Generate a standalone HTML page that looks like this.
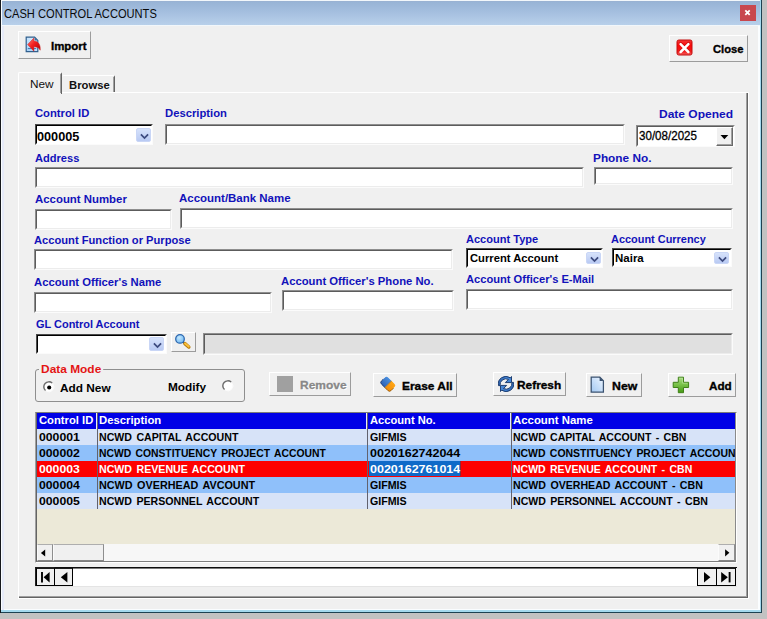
<!DOCTYPE html><html><head><meta charset="utf-8"><title>Cash Control Accounts</title><style>
html,body{margin:0;padding:0;}body{width:767px;height:619px;overflow:hidden;background:#c2c2c2;position:relative;font-family:"Liberation Sans",sans-serif;}
div{position:absolute;}.t{position:absolute;white-space:nowrap;line-height:1;transform-origin:0 0;}svg{display:block;}
</style></head><body>
<div style="left:0px;top:0px;width:762px;height:613px;background:#1e4252;"></div>
<div style="left:1px;top:0px;width:760px;height:612px;background:#a4d9ee;"></div>
<div style="left:1px;top:0px;width:759px;height:610px;background:#fafdff;"></div>
<div style="left:0px;top:0px;width:1px;height:613px;background:#16181c;"></div>
<div style="left:3px;top:1px;width:755px;height:608px;background:#f0f0f0;"></div>
<div style="left:2px;top:26px;width:2px;height:584px;background:#e6eaf8;"></div>
<div style="left:2px;top:0px;width:758px;height:26px;background:#f2f7fb;"></div>
<div style="left:2px;top:1px;width:758px;height:23.5px;background:linear-gradient(#9ab0d0 0,#98b4d6 5%,#a6c0e0 50%,#b8d0ea 100%);"></div>
<div style="left:740px;top:5px;width:16px;height:16px;background:#c8474e;"><svg width="16" height="16" viewBox="0 0 16 16"><path d="M5.3 5.4 L9.7 9.8 M9.7 5.4 L5.3 9.8" stroke="#fff" stroke-width="1.8"/></svg></div>
<div style="left:18px;top:31px;width:73px;height:28px;background:#f0f0f0;box-sizing:border-box;border-top:1px solid #fff;border-left:1px solid #fff;border-right:1px solid #9c9c9c;border-bottom:1px solid #9c9c9c;"><svg width="17" height="17" viewBox="0 0 17 17" style="position:absolute;left:6.1px;top:4.4px"><defs><linearGradient id="gp" x1="0" y1="1" x2="1" y2="0"><stop offset="0" stop-color="#a4d0f8"/><stop offset="1" stop-color="#e6f3ff"/></linearGradient><linearGradient id="gr" x1="0" y1="0" x2="1" y2="1"><stop offset="0" stop-color="#ff8a7a"/><stop offset="0.45" stop-color="#f42020"/><stop offset="1" stop-color="#b00000"/></linearGradient></defs><path d="M1.2 1.2 H9.6 L12.8 4.4 V15.6 H1.2 Z" fill="url(#gp)" stroke="#30608e" stroke-width="1.2"/><path d="M9.6 1.2 V4.4 H12.8 Z" fill="#3f6f9a"/><path d="M2.8 12.6 H11.2" stroke="#3a78b0" stroke-width="1"/><path d="M2.6 8.6 L8.9 2.0 V5.1 C12.6 5.2 15.8 8 15.2 14.2 C14 11.8 12.0 10.8 8.9 10.8 V15.2 Z" fill="url(#gr)" stroke="#d02020" stroke-width="0.5"/></svg></div>
<div style="left:669px;top:35px;width:79px;height:27px;background:#f0f0f0;box-sizing:border-box;border-top:1px solid #fff;border-left:1px solid #fff;border-right:1px solid #9c9c9c;border-bottom:1px solid #9c9c9c;"><svg width="17" height="17" viewBox="0 0 17 17" style="position:absolute;left:5.5px;top:3.4px"><defs><linearGradient id="gc" x1="0" y1="0" x2="0" y2="1"><stop offset="0" stop-color="#f23a3a"/><stop offset="0.35" stop-color="#fa0808"/><stop offset="0.75" stop-color="#f01818"/><stop offset="1" stop-color="#f46060"/></linearGradient></defs><rect x="1" y="1" width="15" height="15" rx="1.8" fill="url(#gc)" stroke="#c40c0c" stroke-width="1"/><path d="M4.6 4.2 L12.6 12.2 M12.6 4.2 L4.6 12.2" stroke="#b80000" stroke-opacity="0.7" stroke-width="2.6" stroke-linecap="round"/><path d="M4.6 5.2 L12.4 13 M12.4 5.2 L4.6 13" stroke="#fff" stroke-width="2.5" stroke-linecap="round"/></svg></div>
<div style="left:18px;top:92px;width:731px;height:507px;box-sizing:border-box;background:#f0f0f0;border-top:1px solid #fff;border-left:1px solid #fff;border-right:1px solid #fff;border-bottom:1px solid #fff;"></div>
<div style="left:19px;top:93px;width:729px;height:505px;box-sizing:border-box;border-right:1px solid #646464;border-bottom:1px solid #646464;"></div>
<div style="left:19px;top:93px;width:728px;height:504px;box-sizing:border-box;border-right:1px solid #a0a0a0;border-bottom:1px solid #a0a0a0;"></div>
<div style="left:62px;top:75px;width:53px;height:17px;box-sizing:border-box;background:#f0f0f0;border-top:1px solid #fff;border-right:1px solid #646464;border-radius:2px 2px 0 0;"></div>
<div style="left:113px;top:77px;width:1px;height:15px;background:#a0a0a0;"></div>
<div style="left:18px;top:72px;width:44px;height:22px;box-sizing:border-box;background:#f0f0f0;border-top:1px solid #fff;border-left:1px solid #fff;border-right:1px solid #646464;border-radius:2px 2px 0 0;"></div>
<div style="left:60px;top:74px;width:1px;height:19px;background:#a0a0a0;"></div>
<div style="left:19px;top:91px;width:41px;height:3px;background:#f0f0f0;"></div>
<div style="left:35px;top:124px;width:118px;height:21px;background:#fff;box-sizing:border-box;border-top:1px solid #4a4a4a;border-left:1px solid #4a4a4a;border-right:1px solid #fbfbfb;border-bottom:1px solid #fbfbfb;"><div style="left:0;top:0;right:0;bottom:0;box-sizing:border-box;border-top:1px solid #000;border-left:1px solid #000;border-right:1px solid #fff;border-bottom:1px solid #fff;"></div></div>
<div style="left:136px;top:128px;width:15px;height:14px;background:linear-gradient(#d6e2fb,#b9caf3);box-sizing:border-box;border:1px solid #c9d6f6;border-radius:2px;"><svg width="15" height="14" viewBox="0 0 15 14" style="position:absolute;left:0;top:0"><path d="M3.9 5.4 L7.5 9 L11.1 5.4" fill="none" stroke="#3c4a7e" stroke-width="1.75" stroke-linecap="butt" stroke-linejoin="miter"/></svg></div>
<div style="left:165px;top:124px;width:460px;height:21px;background:#fff;box-sizing:border-box;border-top:1px solid #8e8e8e;border-left:1px solid #8e8e8e;border-right:1px solid #fbfbfb;border-bottom:1px solid #fbfbfb;"><div style="left:0;top:0;right:0;bottom:0;box-sizing:border-box;border-top:1px solid #5c5c5c;border-left:1px solid #5c5c5c;border-right:1px solid #ececec;border-bottom:1px solid #ececec;"></div></div>
<div style="left:636px;top:125px;width:99px;height:22px;background:#fff;box-sizing:border-box;border-top:1px solid #8e8e8e;border-left:1px solid #8e8e8e;border-right:1px solid #fbfbfb;border-bottom:1px solid #fbfbfb;"><div style="left:0;top:0;right:0;bottom:0;box-sizing:border-box;border-top:1px solid #5c5c5c;border-left:1px solid #5c5c5c;border-right:1px solid #fff;border-bottom:1px solid #fff;"></div></div>
<div style="left:716px;top:127px;width:17px;height:19px;background:#f0f0f0;box-sizing:border-box;border-top:1px solid #fff;border-left:1px solid #fff;border-right:1px solid #6a6a6a;border-bottom:1px solid #6a6a6a;"><div style="left:0;top:0;right:0;bottom:0;box-sizing:border-box;border-right:1px solid #a0a0a0;border-bottom:1px solid #a0a0a0;"></div><svg width="15" height="17" viewBox="0 0 15 17" style="position:absolute;left:0;top:0"><path d="M3.5 7.0 H11.3 L7.4 11.2 Z" fill="#000"/></svg></div>
<div style="left:35px;top:167px;width:549px;height:21px;background:#fff;box-sizing:border-box;border-top:1px solid #8e8e8e;border-left:1px solid #8e8e8e;border-right:1px solid #fbfbfb;border-bottom:1px solid #fbfbfb;"><div style="left:0;top:0;right:0;bottom:0;box-sizing:border-box;border-top:1px solid #5c5c5c;border-left:1px solid #5c5c5c;border-right:1px solid #ececec;border-bottom:1px solid #ececec;"></div></div>
<div style="left:594px;top:167px;width:139px;height:18px;background:#fff;box-sizing:border-box;border-top:1px solid #8e8e8e;border-left:1px solid #8e8e8e;border-right:1px solid #fbfbfb;border-bottom:1px solid #fbfbfb;"><div style="left:0;top:0;right:0;bottom:0;box-sizing:border-box;border-top:1px solid #5c5c5c;border-left:1px solid #5c5c5c;border-right:1px solid #ececec;border-bottom:1px solid #ececec;"></div></div>
<div style="left:35px;top:209px;width:137px;height:21px;background:#fff;box-sizing:border-box;border-top:1px solid #8e8e8e;border-left:1px solid #8e8e8e;border-right:1px solid #fbfbfb;border-bottom:1px solid #fbfbfb;"><div style="left:0;top:0;right:0;bottom:0;box-sizing:border-box;border-top:1px solid #5c5c5c;border-left:1px solid #5c5c5c;border-right:1px solid #ececec;border-bottom:1px solid #ececec;"></div></div>
<div style="left:180px;top:208px;width:553px;height:21px;background:#fff;box-sizing:border-box;border-top:1px solid #8e8e8e;border-left:1px solid #8e8e8e;border-right:1px solid #fbfbfb;border-bottom:1px solid #fbfbfb;"><div style="left:0;top:0;right:0;bottom:0;box-sizing:border-box;border-top:1px solid #5c5c5c;border-left:1px solid #5c5c5c;border-right:1px solid #ececec;border-bottom:1px solid #ececec;"></div></div>
<div style="left:34px;top:249px;width:419px;height:21px;background:#fff;box-sizing:border-box;border-top:1px solid #8e8e8e;border-left:1px solid #8e8e8e;border-right:1px solid #fbfbfb;border-bottom:1px solid #fbfbfb;"><div style="left:0;top:0;right:0;bottom:0;box-sizing:border-box;border-top:1px solid #5c5c5c;border-left:1px solid #5c5c5c;border-right:1px solid #ececec;border-bottom:1px solid #ececec;"></div></div>
<div style="left:466px;top:248px;width:137px;height:20px;background:#fff;box-sizing:border-box;border-top:1px solid #4a4a4a;border-left:1px solid #4a4a4a;border-right:1px solid #fbfbfb;border-bottom:1px solid #fbfbfb;"><div style="left:0;top:0;right:0;bottom:0;box-sizing:border-box;border-top:1px solid #000;border-left:1px solid #000;border-right:1px solid #fff;border-bottom:1px solid #fff;"></div></div>
<div style="left:586px;top:252px;width:15px;height:12px;background:linear-gradient(#d6e2fb,#b9caf3);box-sizing:border-box;border:1px solid #c9d6f6;border-radius:2px;"><svg width="15" height="12" viewBox="0 0 15 12" style="position:absolute;left:0;top:0"><path d="M3.9 4.4 L7.5 8 L11.1 4.4" fill="none" stroke="#3c4a7e" stroke-width="1.75" stroke-linecap="butt" stroke-linejoin="miter"/></svg></div>
<div style="left:612px;top:248px;width:120px;height:19px;background:#fff;box-sizing:border-box;border-top:1px solid #4a4a4a;border-left:1px solid #4a4a4a;border-right:1px solid #fbfbfb;border-bottom:1px solid #fbfbfb;"><div style="left:0;top:0;right:0;bottom:0;box-sizing:border-box;border-top:1px solid #000;border-left:1px solid #000;border-right:1px solid #fff;border-bottom:1px solid #fff;"></div></div>
<div style="left:714px;top:252px;width:15px;height:12px;background:linear-gradient(#d6e2fb,#b9caf3);box-sizing:border-box;border:1px solid #c9d6f6;border-radius:2px;"><svg width="15" height="12" viewBox="0 0 15 12" style="position:absolute;left:0;top:0"><path d="M3.9 4.4 L7.5 8 L11.1 4.4" fill="none" stroke="#3c4a7e" stroke-width="1.75" stroke-linecap="butt" stroke-linejoin="miter"/></svg></div>
<div style="left:34px;top:292px;width:238px;height:21px;background:#fff;box-sizing:border-box;border-top:1px solid #8e8e8e;border-left:1px solid #8e8e8e;border-right:1px solid #fbfbfb;border-bottom:1px solid #fbfbfb;"><div style="left:0;top:0;right:0;bottom:0;box-sizing:border-box;border-top:1px solid #5c5c5c;border-left:1px solid #5c5c5c;border-right:1px solid #ececec;border-bottom:1px solid #ececec;"></div></div>
<div style="left:282px;top:290px;width:172px;height:21px;background:#fff;box-sizing:border-box;border-top:1px solid #8e8e8e;border-left:1px solid #8e8e8e;border-right:1px solid #fbfbfb;border-bottom:1px solid #fbfbfb;"><div style="left:0;top:0;right:0;bottom:0;box-sizing:border-box;border-top:1px solid #5c5c5c;border-left:1px solid #5c5c5c;border-right:1px solid #ececec;border-bottom:1px solid #ececec;"></div></div>
<div style="left:466px;top:289px;width:267px;height:21px;background:#fff;box-sizing:border-box;border-top:1px solid #8e8e8e;border-left:1px solid #8e8e8e;border-right:1px solid #fbfbfb;border-bottom:1px solid #fbfbfb;"><div style="left:0;top:0;right:0;bottom:0;box-sizing:border-box;border-top:1px solid #5c5c5c;border-left:1px solid #5c5c5c;border-right:1px solid #ececec;border-bottom:1px solid #ececec;"></div></div>
<div style="left:36px;top:334px;width:131px;height:20px;background:#fff;box-sizing:border-box;border-top:1px solid #4a4a4a;border-left:1px solid #4a4a4a;border-right:1px solid #fbfbfb;border-bottom:1px solid #fbfbfb;"><div style="left:0;top:0;right:0;bottom:0;box-sizing:border-box;border-top:1px solid #000;border-left:1px solid #000;border-right:1px solid #fff;border-bottom:1px solid #fff;"></div></div>
<div style="left:149px;top:337px;width:15px;height:14px;background:linear-gradient(#d6e2fb,#b9caf3);box-sizing:border-box;border:1px solid #c9d6f6;border-radius:2px;"><svg width="15" height="14" viewBox="0 0 15 14" style="position:absolute;left:0;top:0"><path d="M3.9 5.4 L7.5 9 L11.1 5.4" fill="none" stroke="#3c4a7e" stroke-width="1.75" stroke-linecap="butt" stroke-linejoin="miter"/></svg></div>
<div style="left:171px;top:332px;width:25px;height:20px;background:#f0f0f0;box-sizing:border-box;border-top:1px solid #fff;border-left:1px solid #fff;border-right:1px solid #9c9c9c;border-bottom:1px solid #9c9c9c;"><svg width="22" height="18" viewBox="0 0 22 18" style="position:absolute;left:0;top:0"><defs><radialGradient id="gm" cx="0.4" cy="0.35" r="0.75"><stop offset="0" stop-color="#c4e8fe"/><stop offset="1" stop-color="#68b4f2"/></radialGradient></defs><path d="M10.6 8.6 L12.6 10.4" stroke="#2c4e7c" stroke-width="1.8"/><path d="M12.9 10.6 L16.8 14" stroke="#b87c0c" stroke-width="3.5" stroke-linecap="round"/><path d="M13.1 10.5 L16.7 13.6" stroke="#fac03a" stroke-width="2" stroke-linecap="round"/><circle cx="8" cy="5.9" r="4.3" fill="url(#gm)" stroke="#2f69b0" stroke-width="1.3"/></svg></div>
<div style="left:203px;top:333px;width:530px;height:22px;background:#e0e0e0;box-sizing:border-box;border-top:1px solid #8e8e8e;border-left:1px solid #8e8e8e;border-right:1px solid #fbfbfb;border-bottom:1px solid #fbfbfb;"><div style="left:0;top:0;right:0;bottom:0;box-sizing:border-box;border-top:1px solid #5c5c5c;border-left:1px solid #5c5c5c;border-right:1px solid #ececec;border-bottom:1px solid #ececec;"></div></div>
<div style="left:35px;top:369px;width:210px;height:33px;box-sizing:border-box;border:1px solid #8e8e8e;border-radius:3px;"></div>
<div style="left:43px;top:381px;width:12px;height:12px;"><svg width="12" height="12" viewBox="0 0 12 12"><circle cx="6" cy="6" r="4.7" fill="#fff"/><path d="M2.5 9.6 A5 5 0 0 1 9.2 2.1" fill="none" stroke="#6c6c6c" stroke-width="1.4"/><path d="M9.9 2.9 A5 5 0 0 1 3.2 10.1" fill="none" stroke="#fbfbfb" stroke-width="1"/><circle cx="6.2" cy="6.5" r="2.05" fill="#000"/></svg></div>
<div style="left:221.5px;top:380.2px;width:12px;height:12px;"><svg width="12" height="12" viewBox="0 0 12 12"><circle cx="6" cy="6" r="4.7" fill="#fff"/><path d="M2.5 9.6 A5 5 0 0 1 9.2 2.1" fill="none" stroke="#6c6c6c" stroke-width="1.4"/><path d="M9.9 2.9 A5 5 0 0 1 3.2 10.1" fill="none" stroke="#fbfbfb" stroke-width="1"/></svg></div>
<div style="left:269px;top:372px;width:82px;height:24px;background:#f0f0f0;box-sizing:border-box;border-top:1px solid #fff;border-left:1px solid #fff;border-right:1px solid #9c9c9c;border-bottom:1px solid #9c9c9c;"><div style="left:7px;top:3px;width:16px;height:16px;background:#a0a0a0;"></div></div>
<div style="left:373px;top:373px;width:84px;height:24px;background:#f0f0f0;box-sizing:border-box;border-top:1px solid #fff;border-left:1px solid #fff;border-right:1px solid #9c9c9c;border-bottom:1px solid #9c9c9c;"><svg width="18" height="18" viewBox="0 0 18 18" style="position:absolute;left:5px;top:1.4px"><defs><clipPath id="ce"><rect x="2.2" y="4.3" width="13.6" height="9.4" rx="2.3"/></clipPath><linearGradient id="eb" x1="0" y1="0" x2="0" y2="1"><stop offset="0" stop-color="#4c92e2"/><stop offset="1" stop-color="#2f62b4"/></linearGradient><linearGradient id="eo" x1="0" y1="0" x2="0" y2="1"><stop offset="0" stop-color="#ffa818"/><stop offset="1" stop-color="#f48c08"/></linearGradient></defs><g transform="rotate(45 9 9)"><g clip-path="url(#ce)"><rect x="2" y="4" width="7.2" height="10" fill="url(#eb)"/><rect x="9.2" y="4" width="7" height="10" fill="url(#eo)"/><rect x="8.8" y="4" width="0.8" height="10" fill="#7a6a50" opacity="0.7"/></g><path d="M2.2 9 V11.4 A2.3 2.3 0 0 0 4.5 13.7 H9.2" fill="none" stroke="#1c3c78" stroke-width="0.9"/><path d="M9.2 13.7 H13.5 A2.3 2.3 0 0 0 15.8 11.4 V8" fill="none" stroke="#9c5c08" stroke-width="0.9"/></g></svg></div>
<div style="left:493px;top:372px;width:73px;height:24px;background:#f0f0f0;box-sizing:border-box;border-top:1px solid #fff;border-left:1px solid #fff;border-right:1px solid #9c9c9c;border-bottom:1px solid #9c9c9c;"><svg width="16" height="16" viewBox="0 0 15.3 15.3" style="position:absolute;left:3.9px;top:2.7px"><defs><linearGradient id="gf" x1="0" y1="0" x2="1" y2="0"><stop offset="0" stop-color="#2f66b4"/><stop offset="1" stop-color="#4a8cdc"/></linearGradient></defs><path id="ra" d="M0.5 9.2 A7.2 7.2 0 0 1 11.7 1.7 L12.9 0.5 V6.3 H7.0 L10 3.3 A5.6 5.6 0 0 0 2.0 9.2 Z" fill="url(#gf)" stroke="#16366a" stroke-width="0.9" stroke-linejoin="round"/><use href="#ra" transform="rotate(180 7.65 7.65)"/></svg></div>
<div style="left:586px;top:373px;width:56px;height:24px;background:#f0f0f0;box-sizing:border-box;border-top:1px solid #fff;border-left:1px solid #fff;border-right:1px solid #9c9c9c;border-bottom:1px solid #9c9c9c;"><svg width="15" height="18" viewBox="0 0 15 18" style="position:absolute;left:3.4px;top:2.3px"><defs><linearGradient id="gn" x1="0" y1="1" x2="1" y2="0"><stop offset="0" stop-color="#a2c8f2"/><stop offset="0.6" stop-color="#cfe3fa"/><stop offset="1" stop-color="#f2f8ff"/></linearGradient></defs><path d="M1.2 1.2 H9.8 L13.4 4.8 V16.0 H1.2 Z" fill="url(#gn)" stroke="#3a5270" stroke-width="1.25"/><path d="M9.6 1.2 V5 H13.4 Z" fill="#3a5270"/></svg></div>
<div style="left:668px;top:373px;width:68px;height:24px;background:#f0f0f0;box-sizing:border-box;border-top:1px solid #fff;border-left:1px solid #fff;border-right:1px solid #9c9c9c;border-bottom:1px solid #9c9c9c;"><svg width="18" height="18" viewBox="0 0 18 18" style="position:absolute;left:3.2px;top:2.3px"><defs><linearGradient id="ga" x1="0" y1="0" x2="0" y2="1"><stop offset="0" stop-color="#a8dc84"/><stop offset="0.45" stop-color="#7cc44c"/><stop offset="1" stop-color="#469a14"/></linearGradient></defs><path d="M6.3 1.2 H11.5 V6.3 H16.6 V11.5 H11.5 V16.7 H6.3 V11.5 H1.2 V6.3 H6.3 Z" fill="url(#ga)" stroke="#3f8018" stroke-width="1" stroke-linejoin="round"/><path d="M7.2 2.2 H10.6 V7.2 H15.6" fill="none" stroke="#d4f0b8" stroke-opacity="0.55" stroke-width="0.8"/></svg></div>
<div style="left:35px;top:412px;width:702px;height:151px;box-sizing:border-box;background:#ece9d8;border-top:1px solid #7a7a7a;border-left:1px solid #a0a0a0;border-right:1px solid #fff;border-bottom:1px solid #fff;"></div>
<div style="left:36px;top:413px;width:700px;height:149px;box-sizing:border-box;border-left:1px solid #646464;border-right:1px solid #8a8a8a;border-bottom:1px solid #7e7e7e;"></div>
<div style="left:37px;top:413px;width:698px;height:16px;background:#0000e6;"></div>
<div style="left:37px;top:429px;width:698px;height:16px;background:#d7e3f8;"></div>
<div style="left:37px;top:445px;width:698px;height:16px;background:#8fc0fa;"></div>
<div style="left:37px;top:461px;width:698px;height:16px;background:#fe0000;"></div>
<div style="left:37px;top:477px;width:698px;height:16px;background:#8fc0fa;"></div>
<div style="left:37px;top:493px;width:698px;height:16px;background:#d7e3f8;"></div>
<div style="left:369px;top:461px;width:91px;height:15px;background:#0f6ac8;"></div>
<div style="left:460px;top:461px;width:1px;height:15px;background:#8a2a3a;"></div>
<div style="left:96px;top:413px;width:1px;height:16px;background:#e8e8ff;"></div>
<div style="left:97px;top:413px;width:1px;height:96px;background:#62626e;"></div>
<div style="left:366px;top:413px;width:1px;height:16px;background:#e8e8ff;"></div>
<div style="left:367px;top:413px;width:1px;height:96px;background:#62626e;"></div>
<div style="left:510px;top:413px;width:1px;height:16px;background:#e8e8ff;"></div>
<div style="left:511px;top:413px;width:1px;height:96px;background:#62626e;"></div>
<div style="left:37px;top:544px;width:698px;height:17px;background:#f7f7f7;"></div>
<div style="left:37px;top:544px;width:16px;height:17px;background:#f0f0f0;box-sizing:border-box;border-top:1px solid #aeaeae;border-left:1px solid #fbfbfb;border-right:1px solid #8e8e8e;border-bottom:1px solid #868686;"><svg width="14" height="15" viewBox="0 0 14 15"><path d="M7.2 4.4 V11.4 L2.9 7.9 Z" fill="#000"/></svg></div>
<div style="left:53px;top:544px;width:51px;height:17px;background:#f0f0f0;box-sizing:border-box;border-top:1px solid #aeaeae;border-left:1px solid #fbfbfb;border-right:1px solid #8e8e8e;border-bottom:1px solid #868686;"></div>
<div style="left:718px;top:544px;width:17px;height:17px;background:#f0f0f0;box-sizing:border-box;border-top:1px solid #aeaeae;border-left:1px solid #fbfbfb;border-right:1px solid #8e8e8e;border-bottom:1px solid #868686;"><svg width="15" height="15" viewBox="0 0 15 15"><path d="M6.1 4.2 V11.4 L10.4 7.8 Z" fill="#000"/></svg></div>
<div style="left:35px;top:567px;width:701px;height:20px;box-sizing:border-box;background:#fff;border-top:1px solid #111;border-left:1px solid #222;border-bottom:1px solid #f8f8f8;"></div>
<div style="left:35px;top:586px;width:702px;height:1px;background:#e4e4e4;"></div>
<div style="left:36px;top:567px;width:19px;height:19px;box-sizing:border-box;background:#f0f0f0;border:1px solid #000;border-top:2px solid #1c1c1c;"><svg width="17" height="16" viewBox="0 0 17 16"><path d="M5 3 V13.4" stroke="#000" stroke-width="1.9"/><path d="M12.6 2.9 V13.5 L6.6 8.2 Z" fill="#000"/></svg></div>
<div style="left:54px;top:567px;width:19px;height:19px;box-sizing:border-box;background:#f0f0f0;border:1px solid #000;border-top:2px solid #1c1c1c;"><svg width="17" height="16" viewBox="0 0 17 16"><path d="M12.4 2.9 V13.5 L5.8 8.2 Z" fill="#000"/></svg></div>
<div style="left:55px;top:567px;width:682px;height:1px;background:#0c0c0c;"></div>
<div style="left:73px;top:568px;width:624px;height:1px;background:#7a7a7a;"></div>
<div style="left:697px;top:567px;width:20px;height:19px;box-sizing:border-box;background:#f0f0f0;border:1px solid #000;border-top:2px solid #1c1c1c;"><svg width="18" height="16" viewBox="0 0 18 16"><path d="M6 2.9 V13.5 L12.4 8.2 Z" fill="#000"/></svg></div>
<div style="left:716px;top:567px;width:20px;height:19px;box-sizing:border-box;background:#f0f0f0;border:1px solid #000;border-top:2px solid #1c1c1c;"><svg width="18" height="16" viewBox="0 0 18 16"><path d="M12.6 3 V13.4" stroke="#000" stroke-width="1.9"/><path d="M4.2 2.9 V13.5 L10.8 8.2 Z" fill="#000"/></svg></div>
<span class="t" style="left:3.67px;top:8.04px;font-size:12px;font-weight:normal;color:#0a0a0a;transform:scaleX(0.9268);">CASH CONTROL ACCOUNTS</span>
<span class="t" style="left:50.51px;top:40.48px;font-size:11.6px;font-weight:bold;color:#000;transform:scaleX(0.9857);-webkit-text-stroke:0.35px #000;">Import</span>
<span class="t" style="left:713.00px;top:43.18px;font-size:11.6px;font-weight:bold;color:#000;transform:scaleX(0.9645);-webkit-text-stroke:0.35px #000;">Close</span>
<span class="t" style="left:30.18px;top:77.98px;font-size:11.6px;font-weight:normal;color:#111;transform:scaleX(1.0182);">New</span>
<span class="t" style="left:69.03px;top:78.58px;font-size:11.6px;font-weight:bold;color:#111;transform:scaleX(0.9707);">Browse</span>
<span class="t" style="left:34.75px;top:108.32px;font-size:11.5px;font-weight:bold;color:#1212ba;transform:scaleX(0.9773);">Control ID</span>
<span class="t" style="left:165.22px;top:108.32px;font-size:11.5px;font-weight:bold;color:#1212ba;transform:scaleX(0.9790);">Description</span>
<span class="t" style="left:659.46px;top:109.07px;font-size:11.5px;font-weight:bold;color:#1212ba;transform:scaleX(1.0435);">Date Opened</span>
<span class="t" style="left:35.00px;top:152.57px;font-size:11.5px;font-weight:bold;color:#1212ba;transform:scaleX(0.9644);">Address</span>
<span class="t" style="left:593.47px;top:153.07px;font-size:11.5px;font-weight:bold;color:#1212ba;transform:scaleX(1.0273);">Phone No.</span>
<span class="t" style="left:34.80px;top:193.82px;font-size:11.5px;font-weight:bold;color:#1212ba;transform:scaleX(0.9914);">Account Number</span>
<span class="t" style="left:178.80px;top:193.07px;font-size:11.5px;font-weight:bold;color:#1212ba;transform:scaleX(0.9973);">Account/Bank Name</span>
<span class="t" style="left:34.10px;top:235.07px;font-size:11.5px;font-weight:bold;color:#1212ba;transform:scaleX(0.9696);">Account Function or Purpose</span>
<span class="t" style="left:465.50px;top:233.82px;font-size:11.5px;font-weight:bold;color:#1212ba;transform:scaleX(0.9600);">Account Type</span>
<span class="t" style="left:611.25px;top:233.82px;font-size:11.5px;font-weight:bold;color:#1212ba;transform:scaleX(0.9500);">Account Currency</span>
<span class="t" style="left:33.90px;top:276.57px;font-size:11.5px;font-weight:bold;color:#1212ba;transform:scaleX(0.9792);">Account Officer's Name</span>
<span class="t" style="left:281.30px;top:275.87px;font-size:11.5px;font-weight:bold;color:#1212ba;transform:scaleX(0.9819);">Account Officer's Phone No.</span>
<span class="t" style="left:466.00px;top:273.82px;font-size:11.5px;font-weight:bold;color:#1212ba;transform:scaleX(0.9678);">Account Officer's E-Mail</span>
<span class="t" style="left:35.50px;top:318.57px;font-size:11.5px;font-weight:bold;color:#1212ba;transform:scaleX(0.9518);">GL Control Account</span>
<span class="t" style="left:40.96px;top:364.07px;font-size:11.5px;font-weight:bold;color:#e41414;transform:scaleX(1.0351);background:#f0f0f0;padding:0 2px;margin-left:-2px;">Data Mode</span>
<span class="t" style="left:59.90px;top:382.97px;font-size:11.5px;font-weight:bold;color:#000;transform:scaleX(1.0286);">Add New</span>
<span class="t" style="left:167.77px;top:381.87px;font-size:11.5px;font-weight:bold;color:#000;transform:scaleX(1.0278);">Modify</span>
<span class="t" style="left:37.02px;top:130.00px;font-size:13px;font-weight:bold;color:#000;transform:scaleX(0.9762);">000005</span>
<span class="t" style="left:639.37px;top:130.30px;font-size:12.4px;font-weight:normal;color:#000;transform:scaleX(0.9344);-webkit-text-stroke:0.3px #000;">30/08/2025</span>
<span class="t" style="left:469.50px;top:253.41px;font-size:11.8px;font-weight:bold;color:#000;transform:scaleX(0.9516);">Current Account</span>
<span class="t" style="left:614.53px;top:253.41px;font-size:11.8px;font-weight:bold;color:#000;transform:scaleX(0.9741);">Naira</span>
<span class="t" style="left:299.77px;top:379.08px;font-size:11.6px;font-weight:bold;color:#888;transform:scaleX(1.0318);text-shadow:1px 1px 0 #fff;-webkit-text-stroke:0.3px #888;">Remove</span>
<span class="t" style="left:401.87px;top:380.48px;font-size:11.6px;font-weight:bold;color:#000;transform:scaleX(1.0271);-webkit-text-stroke:0.35px #000;">Erase All</span>
<span class="t" style="left:517.18px;top:379.48px;font-size:11.6px;font-weight:bold;color:#000;transform:scaleX(1.0238);-webkit-text-stroke:0.35px #000;">Refresh</span>
<span class="t" style="left:611.74px;top:380.48px;font-size:11.6px;font-weight:bold;color:#000;transform:scaleX(1.0609);-webkit-text-stroke:0.35px #000;">New</span>
<span class="t" style="left:709.00px;top:380.48px;font-size:11.6px;font-weight:bold;color:#000;transform:scaleX(1.0091);-webkit-text-stroke:0.35px #000;">Add</span>
<span class="t" style="left:38.50px;top:415.27px;font-size:11.5px;font-weight:bold;color:#fff;transform:scaleX(0.9773);">Control ID</span>
<span class="t" style="left:98.52px;top:415.27px;font-size:11.5px;font-weight:bold;color:#fff;transform:scaleX(0.9839);">Description</span>
<span class="t" style="left:369.50px;top:415.27px;font-size:11.5px;font-weight:bold;color:#fff;transform:scaleX(0.9701);">Account No.</span>
<span class="t" style="left:513.25px;top:415.27px;font-size:11.5px;font-weight:bold;color:#fff;transform:scaleX(0.9906);">Account Name</span>
<div style="left:0;top:0;width:735px;height:619px;overflow:hidden;">
<span class="t" style="left:38.80px;top:432.27px;font-size:11.5px;font-weight:bold;color:#000;transform:scaleX(1.0632);">000001</span>
<span class="t" style="left:99.28px;top:432.27px;font-size:11.5px;font-weight:bold;color:#000;transform:scaleX(0.9217);word-spacing:1.6px;">NCWD CAPITAL ACCOUNT</span>
<span class="t" style="left:369.90px;top:432.27px;font-size:11.5px;font-weight:bold;color:#000;transform:scaleX(0.9256);">GIFMIS</span>
<span class="t" style="left:513.29px;top:432.27px;font-size:11.5px;font-weight:bold;color:#000;transform:scaleX(0.9149);word-spacing:1.6px;">NCWD CAPITAL ACCOUNT - CBN</span>
<span class="t" style="left:38.80px;top:448.27px;font-size:11.5px;font-weight:bold;color:#000;transform:scaleX(1.0632);">000002</span>
<span class="t" style="left:99.30px;top:448.27px;font-size:11.5px;font-weight:bold;color:#000;transform:scaleX(0.8994);word-spacing:1.6px;">NCWD CONSTITUENCY PROJECT ACCOUNT</span>
<span class="t" style="left:369.90px;top:448.27px;font-size:11.5px;font-weight:bold;color:#000;transform:scaleX(1.0855);">0020162742044</span>
<span class="t" style="left:513.29px;top:448.27px;font-size:11.5px;font-weight:bold;color:#000;transform:scaleX(0.9082);word-spacing:1.6px;">NCWD CONSTITUENCY PROJECT ACCOUN</span>
<span class="t" style="left:38.80px;top:464.27px;font-size:11.5px;font-weight:bold;color:#fff;transform:scaleX(1.0632);">000003</span>
<span class="t" style="left:99.28px;top:464.27px;font-size:11.5px;font-weight:bold;color:#fff;transform:scaleX(0.9236);word-spacing:1.6px;">NCWD REVENUE ACCOUNT</span>
<span class="t" style="left:369.90px;top:464.27px;font-size:11.5px;font-weight:bold;color:#fff;transform:scaleX(1.0855);">0020162761014</span>
<span class="t" style="left:513.29px;top:464.27px;font-size:11.5px;font-weight:bold;color:#fff;transform:scaleX(0.9128);word-spacing:1.6px;">NCWD REVENUE ACCOUNT - CBN</span>
<span class="t" style="left:38.80px;top:480.27px;font-size:11.5px;font-weight:bold;color:#000;transform:scaleX(1.0632);">000004</span>
<span class="t" style="left:99.26px;top:480.27px;font-size:11.5px;font-weight:bold;color:#000;transform:scaleX(0.9394);word-spacing:1.6px;">NCWD OVERHEAD AVCOUNT</span>
<span class="t" style="left:369.90px;top:480.27px;font-size:11.5px;font-weight:bold;color:#000;transform:scaleX(0.9256);">GIFMIS</span>
<span class="t" style="left:513.28px;top:480.27px;font-size:11.5px;font-weight:bold;color:#000;transform:scaleX(0.9216);word-spacing:1.6px;">NCWD OVERHEAD ACCOUNT - CBN</span>
<span class="t" style="left:38.80px;top:496.27px;font-size:11.5px;font-weight:bold;color:#000;transform:scaleX(1.0632);">000005</span>
<span class="t" style="left:99.28px;top:496.27px;font-size:11.5px;font-weight:bold;color:#000;transform:scaleX(0.9220);word-spacing:1.6px;">NCWD PERSONNEL ACCOUNT</span>
<span class="t" style="left:369.90px;top:496.27px;font-size:11.5px;font-weight:bold;color:#000;transform:scaleX(0.9256);">GIFMIS</span>
<span class="t" style="left:513.28px;top:496.27px;font-size:11.5px;font-weight:bold;color:#000;transform:scaleX(0.9190);word-spacing:1.6px;">NCWD PERSONNEL ACCOUNT - CBN</span>
</div>
</body></html>
